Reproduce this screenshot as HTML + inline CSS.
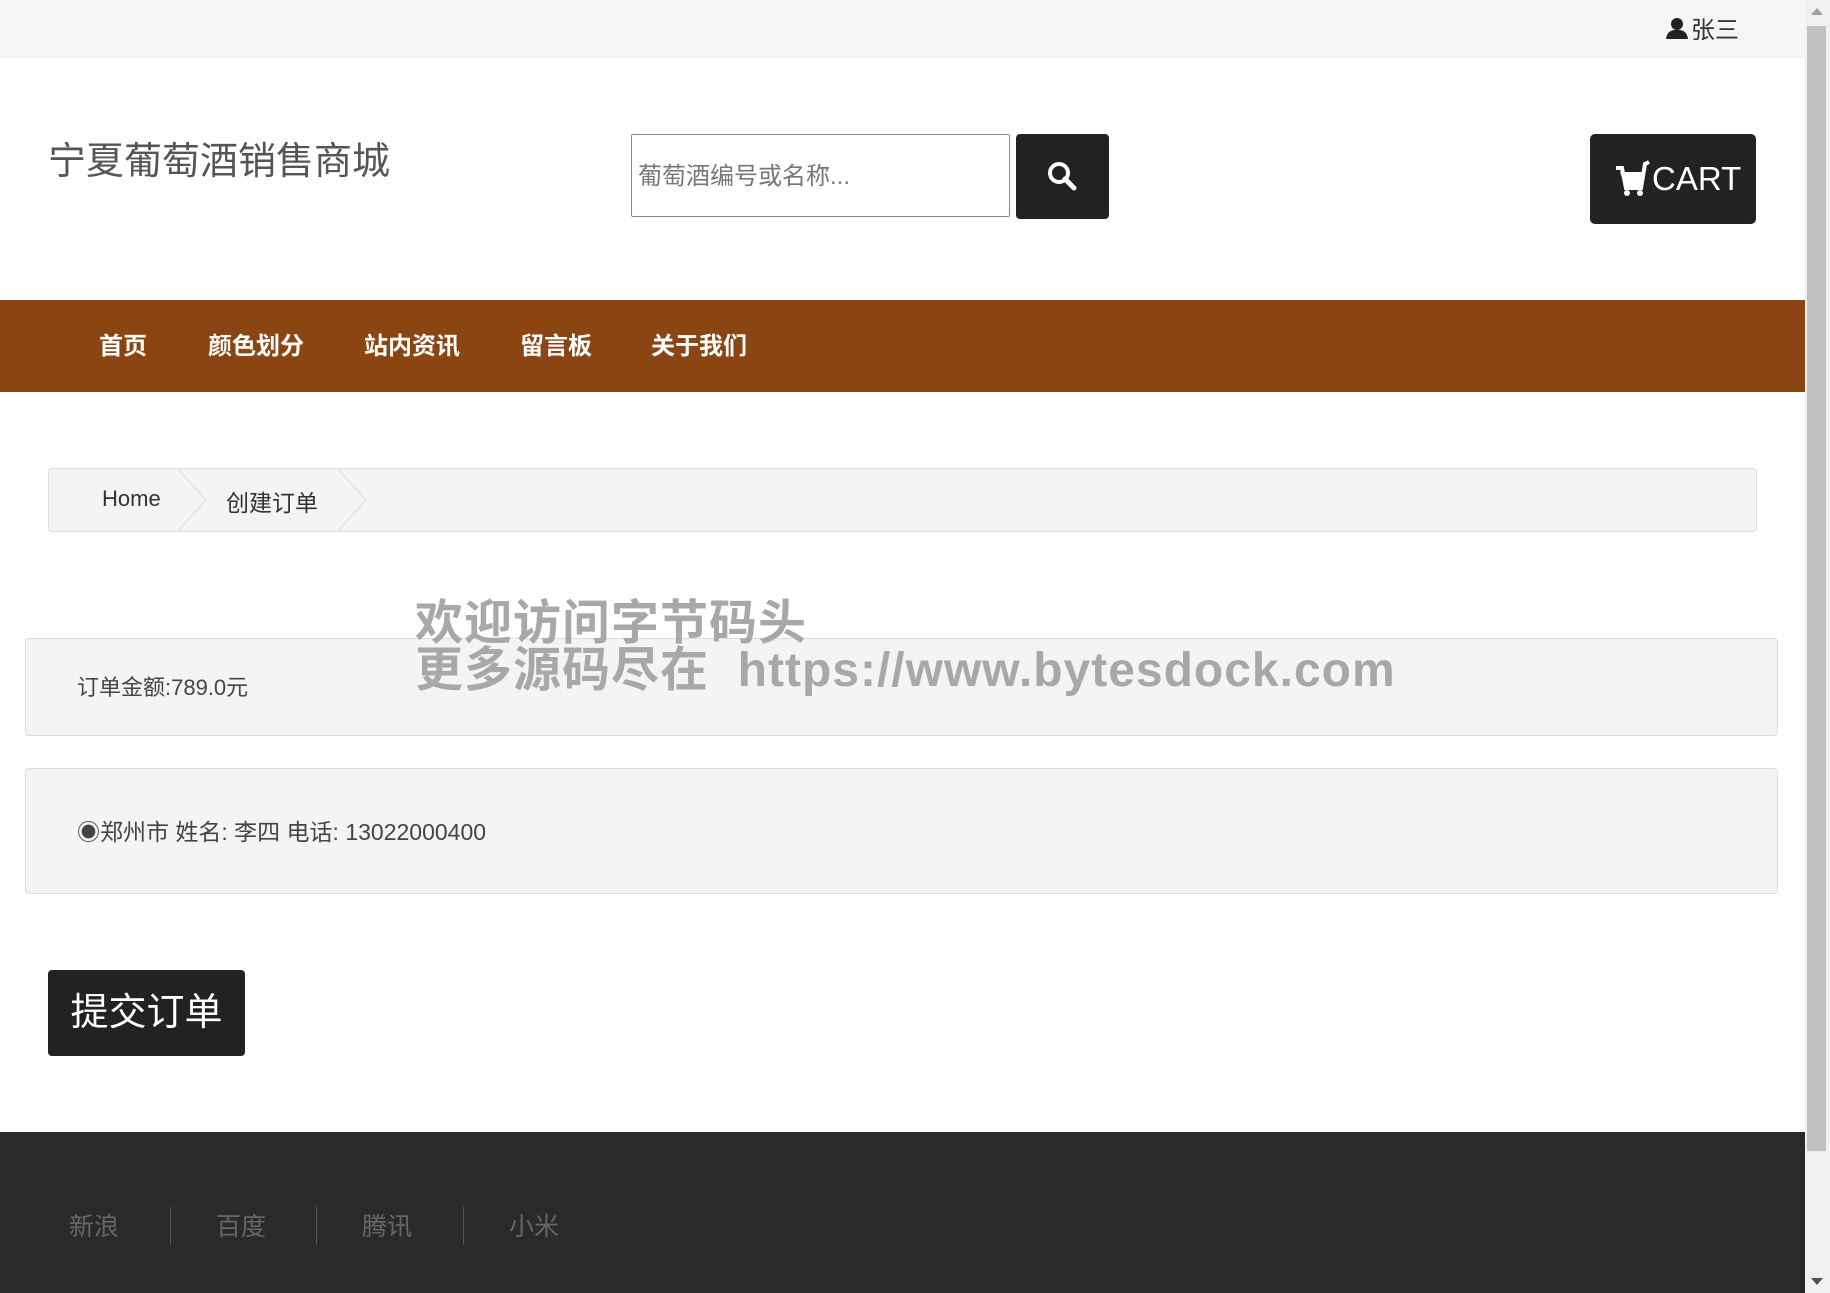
<!DOCTYPE html>
<html><head><meta charset="utf-8"><style>
*{box-sizing:border-box;margin:0;padding:0}
body{width:1830px;height:1293px;overflow:hidden;position:relative;background:#fff;font-family:"Liberation Sans","Noto Sans CJK SC",sans-serif;color:#333}
.a{position:absolute}
</style></head><body>
<div class="a" style="left:0;top:0;width:1805px;height:58px;background:#f5f5f5"></div>
<div class="a" style="left:1665px;top:10px;font-size:24px;color:#333;display:flex;align-items:center;gap:2px">
<svg width="24" height="24" viewBox="0 0 24 24"><circle cx="12" cy="8" r="6" fill="#222"/><path d="M1 23 Q2 15 9 14 L15 14 Q22 15 23 23Z" fill="#222"/></svg>张三</div>
<div class="a" style="left:48px;top:130px;font-size:38px;color:#555">宁夏葡萄酒销售商城</div>
<div class="a" style="left:631px;top:134px;width:379px;height:83px;border:1px solid #888;border-radius:2px;font-size:24px;color:#777;padding:21px 6px">葡萄酒编号或名称...</div>
<div class="a" style="left:1016px;top:134px;width:93px;height:85px;background:#222;border-radius:4px">
<svg class="a" style="left:30px;top:26px" width="32" height="32" viewBox="0 0 32 32"><circle cx="13" cy="13" r="9" fill="none" stroke="#fff" stroke-width="4"/><path d="M19 19 L28 28" stroke="#fff" stroke-width="5" stroke-linecap="round"/></svg></div>
<div class="a" style="left:1590px;top:134px;width:166px;height:90px;background:#222;border-radius:5px;color:#fff;font-size:33px;display:flex;align-items:center;padding-left:24px">
<svg width="38" height="38" viewBox="0 0 38 38"><path d="M2 8 L8 8 L12 28 L27 28 L31 4 L35 2" fill="none" stroke="#fff" stroke-width="4"/><path d="M6 12 L30 12 L28 26 L11 26Z" fill="#fff"/><circle cx="13" cy="33" r="3" fill="#fff"/><circle cx="26" cy="33" r="3" fill="#fff"/></svg><span>CART</span></div>
<div class="a" style="left:0;top:300px;width:1805px;height:92px;background:#8b4513"></div>
<div class="a" style="top:326px;left:99px;font-size:24px;color:#fff;font-weight:bold">首页</div>
<div class="a" style="top:326px;left:208px;font-size:24px;color:#fff;font-weight:bold">颜色划分</div>
<div class="a" style="top:326px;left:364px;font-size:24px;color:#fff;font-weight:bold">站内资讯</div>
<div class="a" style="top:326px;left:520px;font-size:24px;color:#fff;font-weight:bold">留言板</div>
<div class="a" style="top:326px;left:651px;font-size:24px;color:#fff;font-weight:bold">关于我们</div>
<div class="a" style="left:48px;top:468px;width:1709px;height:64px;background:#f4f4f4;border:1px solid #ddd;border-radius:4px"></div>
<svg class="a" style="left:175px;top:469px" width="200" height="62"><path d="M3 0 L31 31 L3 62 M163 0 L191 31 L163 62" fill="none" stroke="#e2e2e2" stroke-width="1.5"/></svg>
<div class="a" style="left:102px;top:486px;font-size:22px;color:#333">Home</div>
<div class="a" style="left:226px;top:484px;font-size:23px;color:#333">创建订单</div>
<div class="a" style="left:25px;top:638px;width:1753px;height:98px;background:#f4f4f4;border:1px solid #ddd;border-radius:4px"></div>
<div class="a" style="left:77px;top:670px;font-size:22px;color:#444">订单金额:789.0元</div>
<div class="a" style="left:25px;top:768px;width:1753px;height:126px;background:#f4f4f4;border:1px solid #ddd;border-radius:4px"></div>
<div class="a" style="left:77px;top:813px;font-size:23px;color:#444">◉郑州市 姓名: 李四 电话: 13022000400</div>
<div class="a" style="left:415px;top:600px;font-size:48px;font-weight:bold;color:#a8a8a8;line-height:47px;white-space:pre;letter-spacing:1px">欢迎访问字节码头
更多源码尽在  https://www.bytesdock.com</div>
<div class="a" style="left:48px;top:970px;width:197px;height:86px;background:#222;border-radius:4px;color:#fff;font-size:38px;text-align:center;line-height:86px">提交订单</div>
<div class="a" style="left:0;top:1132px;width:1805px;height:161px;background:#2a2a2a"></div>
<div class="a" style="left:69px;top:1207px;font-size:25px;color:#666">新浪</div>
<div class="a" style="left:216px;top:1207px;font-size:25px;color:#666">百度</div>
<div class="a" style="left:362px;top:1207px;font-size:25px;color:#666">腾讯</div>
<div class="a" style="left:509px;top:1207px;font-size:25px;color:#666">小米</div>
<div class="a" style="left:170px;top:1207px;width:1px;height:38px;background:#555"></div>
<div class="a" style="left:316px;top:1207px;width:1px;height:38px;background:#555"></div>
<div class="a" style="left:463px;top:1207px;width:1px;height:38px;background:#555"></div>
<div class="a" style="left:1805px;top:0;width:25px;height:1293px;background:#f0f0f0"></div>
<div class="a" style="left:1807px;top:26px;width:19px;height:1125px;background:#c1c1c1"></div>
<div class="a" style="left:1811px;top:8px;width:0;height:0;border-left:6px solid transparent;border-right:6px solid transparent;border-bottom:7px solid #a0a0a0"></div>
<div class="a" style="left:1811px;top:1278px;width:0;height:0;border-left:6px solid transparent;border-right:6px solid transparent;border-top:7px solid #505050"></div>
</body></html>
